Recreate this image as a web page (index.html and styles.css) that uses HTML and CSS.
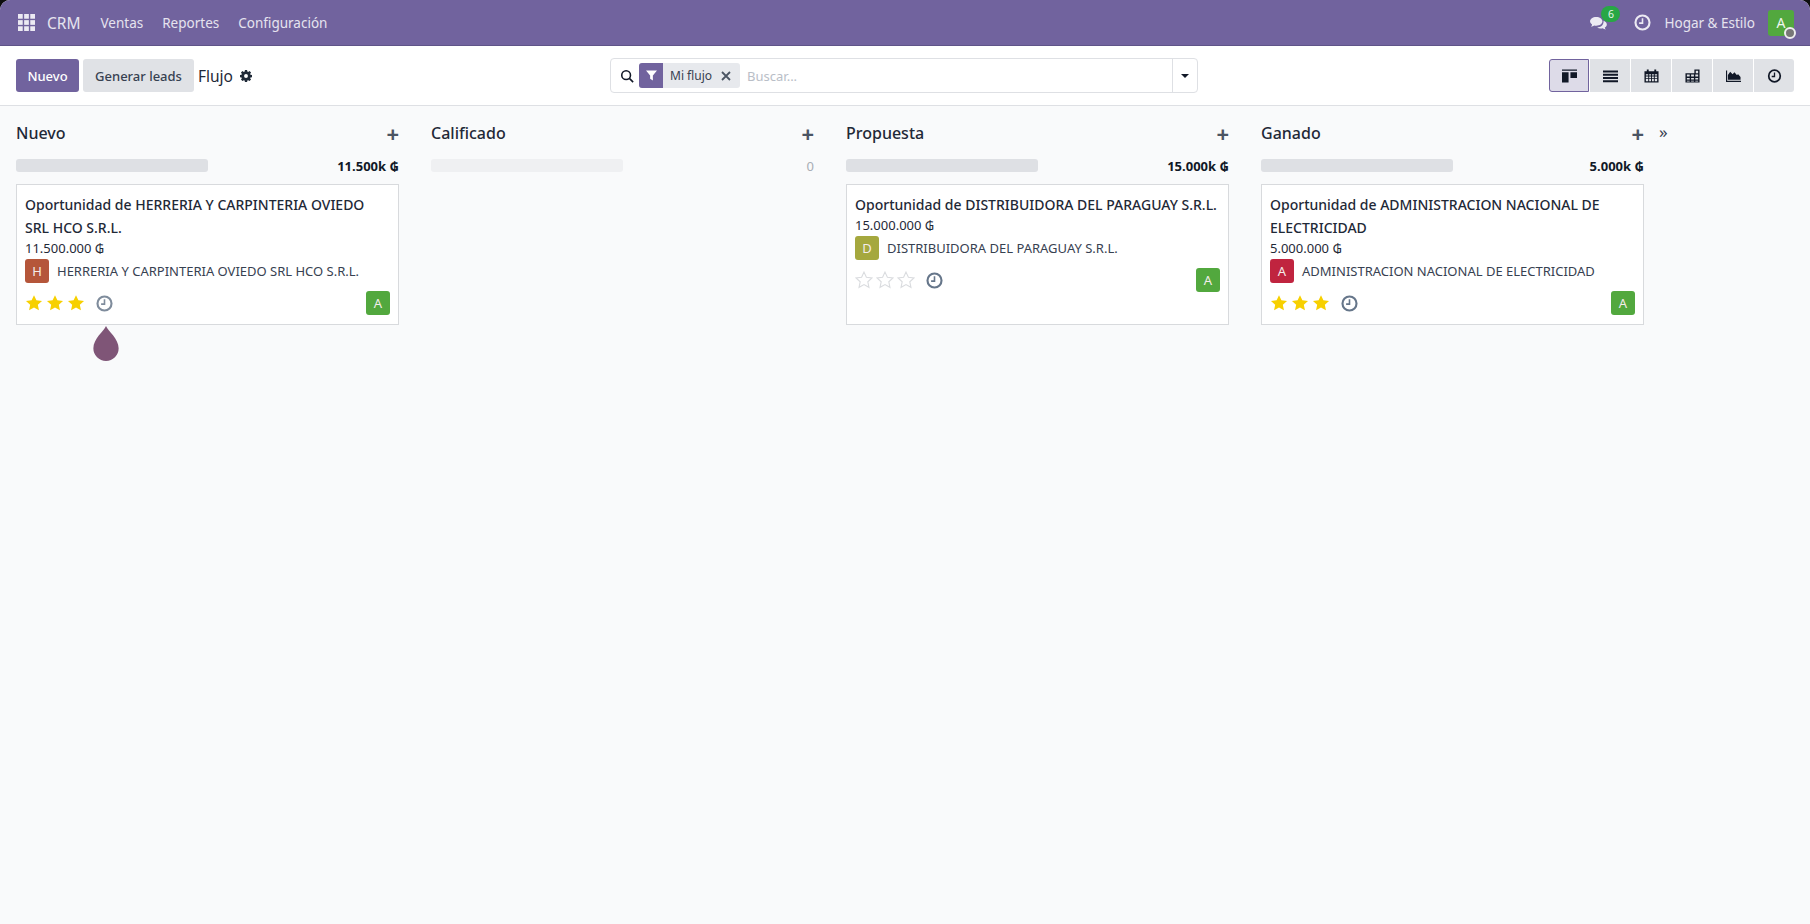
FILE: index.html
```html
<!DOCTYPE html>
<html lang="es">
<head>
    <meta charset="UTF-8">
    <meta name="viewport" content="width=device-width, initial-scale=1.0">
    <title>CRM - Flujo</title>
    <link rel="stylesheet" href="styles.css">
</head>
<body>
    <svg class="icon-defs" aria-hidden="true">
        <symbol id="i-star" viewBox="0 0 24 24"><path d="M12 1.5l3.2 6.9 7.5.9-5.6 5.1 1.5 7.4L12 18.100l-6.600 3.700 1.500-7.400L1.300 9.300l7.500-.9z"/></symbol>
        <symbol id="i-clock" viewBox="0 0 16 16"><circle cx="8" cy="8" r="6.600" fill="none" stroke="currentColor" stroke-width="2"/><path d="M8 4v4.600H4.800" fill="none" stroke="currentColor" stroke-width="1.500"/></symbol>
    </svg>

    <div class="app">
        <!-- Top navigation -->
        <header class="navbar">
            <svg class="apps-icon" viewBox="0 0 18 18" fill="currentColor">
                <rect x="0" y="0" width="5" height="5"/><rect x="6.500" y="0" width="5" height="5"/><rect x="13" y="0" width="5" height="5"/>
                <rect x="0" y="6.500" width="5" height="5"/><rect x="6.500" y="6.500" width="5" height="5"/><rect x="13" y="6.500" width="5" height="5"/>
                <rect x="0" y="13" width="5" height="5"/><rect x="6.500" y="13" width="5" height="5"/><rect x="13" y="13" width="5" height="5"/>
            </svg>
            <span class="brand">CRM</span>
            <nav class="menu">
                <a>Ventas</a>
                <a>Reportes</a>
                <a>Configuración</a>
            </nav>
            <div class="systray">
                <span class="chat">
                    <svg class="chat-icon" viewBox="0 0 20 17" fill="currentColor"><path d="M8 1c4 0 7 2.200 7 5s-3 5-7 5c-.8 0-1.500-.1-2.200-.3C4.800 11.500 3.500 12 2 12.200c.7-.7 1.200-1.500 1.300-2.500C1.900 8.800 1 7.500 1 6c0-2.800 3-5 7-5z"/><path d="M16.300 5.500C18.500 6.300 20 7.800 20 9.500c0 1.400-.9 2.600-2.300 3.400.1.900.6 1.700 1.300 2.400-1.500-.2-2.800-.7-3.800-1.500-.7.200-1.400.3-2.200.3-1.500 0-2.900-.4-4-1 4.200-.1 7.700-2.700 7.300-7.600z"/></svg>
                    <span class="chat-badge">6</span>
                </span>
                <svg class="nav-clock"><use href="#i-clock"/></svg>
                <span class="company">Hogar &amp; Estilo</span>
                <span class="user-avatar">A<i class="user-dot"></i></span>
            </div>
        </header>

        <!-- Control panel -->
        <div class="toolbar">
            <div class="toolbar-left">
                <button class="btn btn-primary">Nuevo</button>
                <button class="btn btn-secondary">Generar leads</button>
                <span class="page-title">Flujo</span>
                <svg class="gear" viewBox="0 0 16 16" fill="currentColor"><path fill-rule="evenodd" d="M6.600 0h2.800l.4 2.100 1.100.5L12.700 1.400l2 2-1.200 1.800.5 1.100 2 .4v2.800l-2 .4-.5 1.100 1.200 1.800-2 2-1.800-1.200-1.100.5-.4 2.100H6.600l-.4-2.100-1.100-.5-1.800 1.200-2-2 1.200-1.800L2 9.900 0 9.500V6.700l2-.4.5-1.100L1.300 3.400l2-2 1.800 1.200 1.100-.5zM8 5.400a2.600 2.600 0 1 0 0 5.200 2.600 2.600 0 0 0 0-5.200z"/></svg>
            </div>
            <div class="search">
                <svg class="search-icon" viewBox="0 0 16 16" fill="none" stroke="currentColor" stroke-width="1.800"><circle cx="7" cy="7" r="5"/><path d="M10.700 10.700L15 15"/></svg>
                <span class="facet">
                    <span class="facet-icon"><svg viewBox="0 0 12 12" fill="#fff"><path d="M0 .5h12L7.500 6v5.500L4.500 9.500V6z"/></svg></span>
                    <span class="facet-label">Mi flujo</span>
                    <svg class="facet-close" viewBox="0 0 10 10" stroke="currentColor" stroke-width="1.800"><path d="M1 1l8 8M9 1l-8 8"/></svg>
                </span>
                <span class="search-input">Buscar...</span>
                <span class="search-caret"><i></i></span>
            </div>
            <div class="views">
                <button class="view active">
                    <svg viewBox="0 0 16 14"><path d="M0 0h16v1.500H0zM0 3h7v11H0zM9 3h7v6H9z"/></svg>
                </button>
                <button class="view">
                    <svg viewBox="0 0 16 14"><path d="M0 1h16v2.200H0zM0 4.500h16v2.200H0zM0 8h16v2.200H0zM0 11.500h16v2.200H0z"/></svg>
                </button>
                <button class="view">
                    <svg viewBox="0 0 16 14"><path fill-rule="evenodd" d="M3 0h2v2h6V0h2v2h2.500v12H.5V2H3zM2 5v1.500h2.500V5zm3.500 0v1.500h2V5zm3 0v1.500h2V5zm3 0v1.500H14V5zM2 7.500V9h2.500V7.500zm3.500 0V9h2V7.500zm3 0V9h2V7.500zm3 0V9H14V7.500zM2 10v2.500h2.500V10zm3.500 0v2.500h2V10zm3 0v2.500h2V10zm3 0v2.500H14V10z"/></svg>
                </button>
                <button class="view">
                    <svg viewBox="0 0 16 14"><path fill-rule="evenodd" d="M.5 4H10V0h5.500v14H.5zM2 5.500v2h3v-2zm4.500 0v2h3v-2zM11 5.500v2h3v-2zM2 9v1.800h3V9zm4.500 0v1.800h3V9zM11 9v1.800h3V9zM2 12v.8h3V12zm4.500 0v.8h3V12zM11 12v.8h3V12zM11.500 1.500V4H14V1.500z"/></svg>
                </button>
                <button class="view">
                    <svg viewBox="0 0 16 14"><path d="M0 1h1.200v11H16v1.500H0z"/><path d="M2 11V6l2.500-3.500L7 5l2-2 2.500 3 1.500-1 2.500 3v3z"/></svg>
                </button>
                <button class="view">
                    <svg class="view-clock"><use href="#i-clock"/></svg>
                </button>
            </div>
        </div>

        <!-- Kanban -->
        <main class="kanban">
            <section class="column">
                <div class="column-head"><span class="column-title">Nuevo</span><span class="column-add">+</span></div>
                <div class="progress"><span class="progress-bar"></span><span class="column-total">11.500k ₲</span></div>
                <article class="card">
                    <h3 class="card-title">Oportunidad de HERRERIA Y CARPINTERIA OVIEDO SRL HCO S.R.L.</h3>
                    <div class="card-amount">11.500.000 ₲</div>
                    <div class="card-partner"><span class="avatar avatar-h">H</span>HERRERIA Y CARPINTERIA OVIEDO SRL HCO S.R.L.</div>
                    <div class="card-foot">
                        <span class="stars"><svg><use href="#i-star"/></svg><svg><use href="#i-star"/></svg><svg><use href="#i-star"/></svg></span>
                        <svg class="card-clock soft"><use href="#i-clock"/></svg>
                        <span class="avatar avatar-user">A</span>
                    </div>
                    <svg class="drop" viewBox="0 0 26 36"><path d="M13 0c2 5 13 13 13 23a13 13 0 0 1-26 0C0 13 11 5 13 0z"/></svg>
                </article>
            </section>

            <section class="column">
                <div class="column-head"><span class="column-title">Calificado</span><span class="column-add">+</span></div>
                <div class="progress"><span class="progress-bar empty"></span><span class="column-total zero">0</span></div>
            </section>

            <section class="column">
                <div class="column-head"><span class="column-title">Propuesta</span><span class="column-add">+</span></div>
                <div class="progress"><span class="progress-bar"></span><span class="column-total">15.000k ₲</span></div>
                <article class="card">
                    <h3 class="card-title">Oportunidad de DISTRIBUIDORA DEL PARAGUAY S.R.L.</h3>
                    <div class="card-amount">15.000.000 ₲</div>
                    <div class="card-partner"><span class="avatar avatar-d">D</span>DISTRIBUIDORA DEL PARAGUAY S.R.L.</div>
                    <div class="card-foot">
                        <span class="stars off"><svg><use href="#i-star"/></svg><svg><use href="#i-star"/></svg><svg><use href="#i-star"/></svg></span>
                        <svg class="card-clock"><use href="#i-clock"/></svg>
                        <span class="avatar avatar-user">A</span>
                    </div>
                </article>
            </section>

            <section class="column">
                <div class="column-head"><span class="column-title">Ganado</span><span class="column-add">+</span></div>
                <div class="progress"><span class="progress-bar"></span><span class="column-total">5.000k ₲</span></div>
                <article class="card">
                    <h3 class="card-title">Oportunidad de ADMINISTRACION NACIONAL DE ELECTRICIDAD</h3>
                    <div class="card-amount">5.000.000 ₲</div>
                    <div class="card-partner"><span class="avatar avatar-a">A</span>ADMINISTRACION NACIONAL DE ELECTRICIDAD</div>
                    <div class="card-foot">
                        <span class="stars"><svg><use href="#i-star"/></svg><svg><use href="#i-star"/></svg><svg><use href="#i-star"/></svg></span>
                        <svg class="card-clock"><use href="#i-clock"/></svg>
                        <span class="avatar avatar-user">A</span>
                    </div>
                </article>
            </section>

            <span class="fold">»</span>
        </main>
    </div>
</body>
</html>
```

FILE: styles.css
```css
* {
    box-sizing: border-box;
}

html, body {
    height: 100%;
}

body {
    margin: 0;
    background: #0d0d0f;
    font-family: "Noto Sans", "Open Sans", sans-serif;
    font-size: 13px;
    color: #374151;
    overflow: hidden;
}

.icon-defs {
    display: none;
}

.app {
    height: 100%;
    display: flex;
    flex-direction: column;
    background: #f9fafb;
    border-radius: 10px 10px 0 0;
    overflow: hidden;
}

/* Navbar */
.navbar {
    height: 46px;
    flex: none;
    display: flex;
    align-items: center;
    padding: 0 16px 0 18px;
    background: #71639e;
    border-bottom: 1px solid #5f5488;
    color: #fff;
}

.apps-icon {
    width: 17px;
    height: 17px;
    color: #eceaf3;
}

.brand {
    margin-left: 12px;
    font-size: 15.500px;
    color: #e6e3ef;
}

.menu {
    display: flex;
    gap: 19px;
    margin-left: 20px;
}

.menu a {
    font-size: 13.500px;
    color: #e6e3ef;
}

.systray {
    margin-left: auto;
    display: flex;
    align-items: center;
}

.chat {
    position: relative;
    display: flex;
    margin-right: 27px;
}

.chat-icon {
    width: 18px;
    height: 15px;
    margin-top: 2px;
    color: #eceaf3;
}

.chat-badge {
    position: absolute;
    left: 12px;
    top: -8px;
    width: 19px;
    height: 16px;
    border-radius: 9px;
    background: #28a745;
    color: #e8f5ea;
    font-size: 10.500px;
    line-height: 16px;
    text-align: center;
}

.nav-clock {
    width: 17px;
    height: 17px;
    color: #eceaf3;
}

.company {
    margin-left: 13px;
    font-size: 13.500px;
    color: #e6e3ef;
}

.user-avatar {
    position: relative;
    width: 26px;
    height: 26px;
    margin-left: 13px;
    border-radius: 3px;
    background: #52a83e;
    color: #f0f6ee;
    font-size: 14px;
    line-height: 26px;
    text-align: center;
}

.user-dot {
    position: absolute;
    right: -2px;
    bottom: -3px;
    width: 12px;
    height: 12px;
    border-radius: 50%;
    border: 2px solid #eee;
    background: #777;
}

/* Control panel */
.toolbar {
    height: 60px;
    flex: none;
    display: grid;
    grid-template-columns: 594px 588px 1fr;
    align-items: center;
    padding: 0 16px;
    background: #fff;
    border-bottom: 1px solid #dee0e4;
}

.toolbar-left {
    display: flex;
    align-items: center;
}

.btn {
    height: 33px;
    padding: 0 10px;
    border: none;
    border-radius: 3px;
    font-family: inherit;
    font-size: 13px;
    font-weight: 500;
}

.btn-primary {
    width: 63px;
    background: #71639e;
    color: #fff;
}

.btn-secondary {
    width: 111px;
    margin-left: 4px;
    background: #e0e2e6;
    color: #374151;
}

.page-title {
    margin-left: 4px;
    font-size: 15.500px;
    color: #1f2937;
}

.gear {
    width: 12px;
    height: 12px;
    margin-left: 7px;
    color: #1f2937;
}

.search {
    height: 35px;
    display: flex;
    align-items: center;
    border: 1px solid #dee0e4;
    border-radius: 4px;
}

.search-icon {
    width: 14px;
    height: 14px;
    margin-left: 9px;
    color: #111827;
}

.facet {
    height: 25px;
    display: flex;
    align-items: center;
    margin-left: 5px;
    border-radius: 3px;
    background: #e7e9ed;
    overflow: hidden;
}

.facet-icon {
    width: 24px;
    height: 100%;
    display: flex;
    align-items: center;
    justify-content: center;
    background: #71639e;
}

.facet-icon svg {
    width: 11px;
    height: 11px;
}

.facet-label {
    margin-left: 7px;
    font-size: 12px;
    color: #374151;
}

.facet-close {
    width: 10px;
    height: 10px;
    margin: 0 9px;
    color: #4b5563;
}

.search-input {
    margin-left: 7px;
    font-size: 13px;
    color: #b9bec7;
}

.search-caret {
    width: 25px;
    height: 100%;
    margin-left: auto;
    display: flex;
    align-items: center;
    justify-content: center;
    border-left: 1px solid #dee0e4;
}

.search-caret i {
    border-top: 4px solid #111827;
    border-left: 4px solid transparent;
    border-right: 4px solid transparent;
}

.views {
    justify-self: end;
    display: flex;
    gap: 1px;
}

.view {
    width: 40px;
    height: 33px;
    padding: 0;
    display: flex;
    align-items: center;
    justify-content: center;
    border: none;
    background: #e0e2e6;
}

.view:first-child {
    border-radius: 3px 0 0 3px;
}

.view:last-child {
    border-radius: 0 3px 3px 0;
}

.view.active {
    background: #dddbe8;
    border: 1px solid #71639e;
}

.view svg {
    width: 15px;
    height: 14px;
    fill: #111827;
}

.view svg.view-clock {
    fill: none;
    color: #111827;
}

/* Kanban */
.kanban {
    flex: 1;
    display: flex;
    gap: 32px;
    padding: 16px 16px 0;
}

.column {
    width: 383px;
    flex: none;
}

.column-head {
    height: 22px;
    display: flex;
    justify-content: space-between;
    align-items: center;
}

.column-title {
    font-size: 16px;
    font-weight: 500;
    color: #1f2937;
}

.column-add {
    font-size: 22px;
    font-weight: 700;
    line-height: 20px;
    color: #4b5563;
}

.progress {
    height: 25px;
    margin-top: 9px;
    display: flex;
    justify-content: space-between;
    align-items: center;
}

.progress-bar {
    width: 192px;
    height: 13px;
    border-radius: 3px;
    background: #dee0e4;
}

.progress-bar.empty {
    background: #eff0f2;
}

.column-total {
    font-size: 13px;
    font-weight: 700;
    color: #111827;
}

.column-total.zero {
    font-weight: 400;
    color: #a8adb5;
}

.card {
    position: relative;
    height: 141px;
    margin-top: 6px;
    padding: 8px;
    background: #fff;
    border: 1px solid #d8dadd;
}

.card-title {
    margin: 0;
    font-size: 14px;
    font-weight: 500;
    line-height: 23px;
    color: #1f2937;
}

.card-amount {
    line-height: 19px;
    color: #1f2937;
}

.card-partner {
    display: flex;
    align-items: center;
    gap: 8px;
    margin-top: 1px;
    color: #374151;
}

.avatar {
    width: 24px;
    height: 24px;
    flex: none;
    border-radius: 3px;
    color: #f4ecea;
    font-size: 13px;
    line-height: 24px;
    text-align: center;
}

.avatar-h {
    background: #b5563a;
}

.avatar-d {
    background: #a5a83e;
}

.avatar-a {
    background: #c0243f;
}

.avatar-user {
    margin-left: auto;
    background: #52a83e;
}

.card-foot {
    display: flex;
    align-items: center;
    margin-top: 8px;
}

.stars {
    display: flex;
    gap: 3px;
}

.stars svg {
    width: 18px;
    height: 18px;
    fill: #f7d000;
}

.stars.off svg {
    fill: #fff;
    stroke: #dadcdf;
    stroke-width: 1.500;
}

.card-clock {
    width: 17px;
    height: 17px;
    margin-left: 11px;
    color: #66768a;
}

.card-clock.soft {
    color: #7f8c9c;
}

.drop {
    position: absolute;
    left: 76px;
    top: 141px;
    width: 26px;
    height: 35px;
    fill: #7f5577;
}

.fold {
    margin-left: -17px;
    font-size: 17px;
    line-height: 20px;
    color: #374151;
}
```
